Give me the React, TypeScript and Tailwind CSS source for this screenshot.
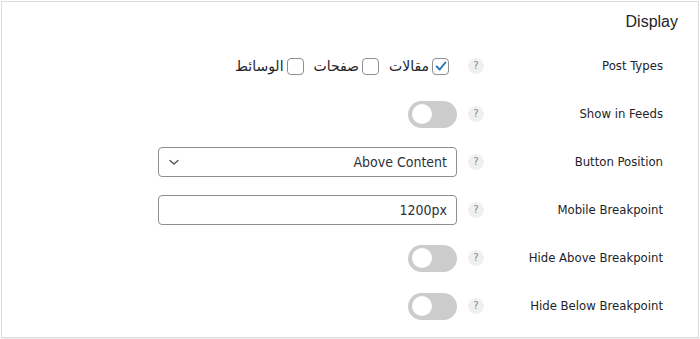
import React from "react";

const labelFont = { fontFamily: '"DejaVu Sans Condensed", "DejaVu Sans", sans-serif' };

function Help() {
  return (
    <div className="mr-[12px] flex h-[16px] w-[16px] shrink-0 items-center justify-center rounded-full bg-[#f0f0f1] text-[10px] leading-none text-[#8a8a8a]" style={{ fontFamily: '"DejaVu Sans", sans-serif' }}>
      ?
    </div>
  );
}

function Toggle() {
  return (
    <div className="flex h-[27px] w-[49px] items-center rounded-full bg-[#cccccc] px-[4px]" dir="ltr">
      <div className="h-[20px] w-[20px] rounded-full bg-white" />
    </div>
  );
}

function Check({ checked, label }: { checked?: boolean; label: string }) {
  return (
    <label className="flex items-center gap-[3px]">
      <span className="flex h-[17px] w-[17px] items-center justify-center rounded-[4px] border border-[#8c8f94] bg-white">
        {checked && (
          <svg width="14" height="14" viewBox="0 0 16 16" fill="none">
            <path d="M3 8.5 L6.5 12 L13 4" stroke="#2271b1" strokeWidth="2.2" strokeLinecap="round" strokeLinejoin="round" />
          </svg>
        )}
      </span>
      <span className="text-[14px] text-[#1d2327]" style={{ fontFamily: '"DejaVu Sans", "Noto Sans", sans-serif' }}>{label}</span>
    </label>
  );
}

function Row({ label, children }: { label: string; children: React.ReactNode }) {
  return (
    <div className="flex h-[48px] items-center">
      <div className="w-[202px] shrink-0 pr-[35px] text-right text-[13px] text-[#1d2327]" style={labelFont}>
        {label}
      </div>
      <Help />
      <div className="mr-[11px] flex items-center">{children}</div>
    </div>
  );
}

export default function App() {
  return (
    <div className="h-[339px] w-[700px] bg-white p-[1px]">
      <div dir="rtl" className="flex h-[337px] w-[698px] flex-col border border-[#dcdcde] bg-white shadow-[0_1px_1px_rgba(0,0,0,0.06)]">
        <div className="flex h-[40px] items-center pr-[20px] text-[16px] text-[#1d2327]" style={{ fontFamily: '"Liberation Sans", Arial, sans-serif' }}>
          Display
        </div>
        <Row label="Post Types">
          <div className="flex items-center gap-[10px] pr-[8px]">
            <Check checked label="مقالات" />
            <Check label="صفحات" />
            <Check label="الوسائط" />
          </div>
        </Row>
        <Row label="Show in Feeds">
          <Toggle />
        </Row>
        <Row label="Button Position">
          <div className="flex h-[30px] w-[299px] items-center justify-between rounded-[4px] border border-[#8c8f94] bg-white pl-[9px] pr-[9px] text-[14px] text-[#2c3338]" style={labelFont}>
            <span>Above Content</span>
            <svg width="12" height="12" viewBox="0 0 12 12" fill="none">
              <path d="M2 4.5 L6 8 L10 4.5" stroke="#50575e" strokeWidth="1.4" strokeLinecap="round" strokeLinejoin="round" />
            </svg>
          </div>
        </Row>
        <Row label="Mobile Breakpoint">
          <div className="flex h-[30px] w-[299px] items-center rounded-[4px] border border-[#8c8f94] bg-white pr-[9px] text-[14px] text-[#2c3338]" style={labelFont}>
            1200px
          </div>
        </Row>
        <Row label="Hide Above Breakpoint">
          <Toggle />
        </Row>
        <Row label="Hide Below Breakpoint">
          <Toggle />
        </Row>
      </div>
    </div>
  );
}
